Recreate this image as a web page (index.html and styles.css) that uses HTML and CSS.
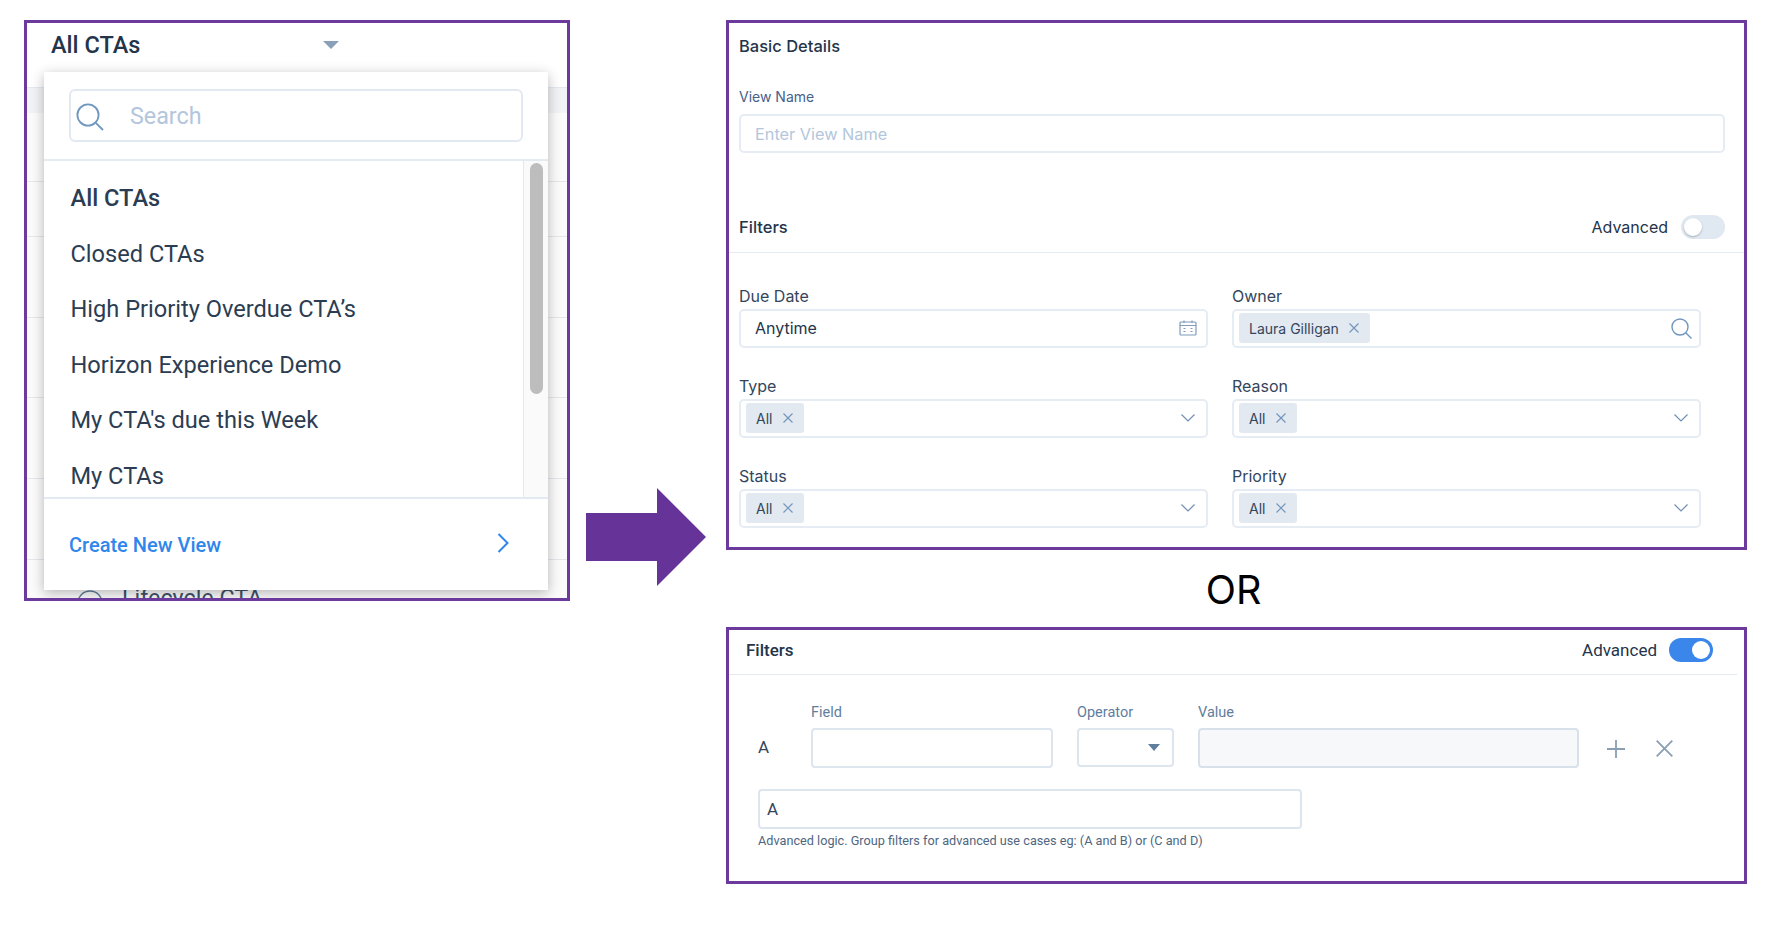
FILE: index.html
```html
<!DOCTYPE html>
<html lang="en">
<head>
    <meta charset="UTF-8">
    <meta name="viewport" content="width=device-width, initial-scale=1.0">
    <title>CTA Views</title>
    <link rel="stylesheet" href="styles.css">
</head>
<body>
    <section class="frame views-frame">
        <div class="views-header">
            <span class="views-title">All CTAs</span>
            <span class="caret views-caret"></span>
        </div>
        <div class="views-bg">
            <div class="bg-row"></div>
            <div class="bg-row"></div>
            <div class="bg-row"></div>
            <div class="bg-row"></div>
            <div class="bg-row"></div>
            <div class="bg-row"></div>
            <div class="bg-row"></div>
            <div class="bg-last">
                <svg class="bg-circle" viewBox="0 0 26 26"><circle cx="13" cy="13" r="12" fill="none" stroke="#5f7d9c" stroke-width="1.5"/></svg>
                <span>Lifecycle CTA</span>
            </div>
        </div>

        <div class="popup">
            <div class="popup-search">
                <div class="search-box">
                    <svg class="search-icon" viewBox="0 0 28 28"><circle cx="12" cy="12" r="10.6" fill="none" stroke="#6f97bf" stroke-width="1.8"/><path d="M19.8 19.8 L27 27" stroke="#6f97bf" stroke-width="1.8" fill="none"/></svg>
                    <span>Search</span>
                </div>
            </div>
            <div class="popup-list">
                <ul class="list-items">
                    <li class="current">All CTAs</li>
                    <li>Closed CTAs</li>
                    <li>High Priority Overdue CTA’s</li>
                    <li>Horizon Experience Demo</li>
                    <li>My CTA's due this Week</li>
                    <li>My CTAs</li>
                </ul>
                <div class="scroll-track"><div class="scroll-thumb"></div></div>
            </div>
            <div class="popup-footer">
                <span>Create New View</span>
                <svg class="footer-chevron" viewBox="0 0 12 20"><path d="M1.5 1 L10.5 10 L1.5 19" fill="none" stroke="#2f86eb" stroke-width="2"/></svg>
            </div>
        </div>
    </section>

    <svg class="big-arrow" viewBox="0 0 120 98"><path d="M0 25 H71 V0 L120 49 L71 98 V73 H0 Z" fill="#663399"/></svg>

    <div class="right-col">
        <section class="frame basic-frame">
            <h3 class="section-title basic-title">Basic Details</h3>
            <label class="small-label">View Name</label>
            <div class="field name-field placeholder">Enter View Name</div>

            <div class="filters-head">
                <h3 class="section-title">Filters</h3>
                <span class="adv-label">Advanced</span>
                <span class="toggle"><span class="knob"></span></span>
            </div>

            <div class="filter-grid">
                <div class="filter">
                    <label>Due Date</label>
                    <div class="field">
                        <span class="plain-value">Anytime</span>
                        <svg class="calendar" viewBox="0 0 18 16"><rect x="1" y="2" width="16" height="13" rx="1" fill="none" stroke="#7f9cbb" stroke-width="1.2"/><path d="M1 5.5 H17 M5 0.5 V3 M13 0.5 V3" stroke="#7f9cbb" stroke-width="1.2"/><path d="M4.5 8.5h2M11.5 8.5h2M4.5 11.5h2M11.5 11.5h2" stroke="#7f9cbb" stroke-width="1.2"/></svg>
                    </div>
                </div>
                <div class="filter">
                    <label>Owner</label>
                    <div class="field">
                        <span class="tag">Laura Gilligan <svg class="tag-x" viewBox="0 0 10 10"><path d="M0.5 0.5 L9.5 9.5 M9.5 0.5 L0.5 9.5" stroke="#7094bb" stroke-width="1.1"/></svg></span>
                        <svg class="owner-search" viewBox="0 0 21 21"><circle cx="9" cy="9" r="8" fill="none" stroke="#6f97bf" stroke-width="1.4"/><path d="M14.8 14.8 L20.5 20.5" stroke="#6f97bf" stroke-width="1.4"/></svg>
                    </div>
                </div>
                <div class="filter">
                    <label>Type</label>
                    <div class="field">
                        <span class="tag">All <svg class="tag-x" viewBox="0 0 10 10"><path d="M0.5 0.5 L9.5 9.5 M9.5 0.5 L0.5 9.5" stroke="#7094bb" stroke-width="1.1"/></svg></span>
                        <svg class="chevron" viewBox="0 0 14 8"><path d="M0.5 0.5 L7 7 L13.5 0.5" fill="none" stroke="#6f8fb3" stroke-width="1.2"/></svg>
                    </div>
                </div>
                <div class="filter">
                    <label>Reason</label>
                    <div class="field">
                        <span class="tag">All <svg class="tag-x" viewBox="0 0 10 10"><path d="M0.5 0.5 L9.5 9.5 M9.5 0.5 L0.5 9.5" stroke="#7094bb" stroke-width="1.1"/></svg></span>
                        <svg class="chevron" viewBox="0 0 14 8"><path d="M0.5 0.5 L7 7 L13.5 0.5" fill="none" stroke="#6f8fb3" stroke-width="1.2"/></svg>
                    </div>
                </div>
                <div class="filter">
                    <label>Status</label>
                    <div class="field">
                        <span class="tag">All <svg class="tag-x" viewBox="0 0 10 10"><path d="M0.5 0.5 L9.5 9.5 M9.5 0.5 L0.5 9.5" stroke="#7094bb" stroke-width="1.1"/></svg></span>
                        <svg class="chevron" viewBox="0 0 14 8"><path d="M0.5 0.5 L7 7 L13.5 0.5" fill="none" stroke="#6f8fb3" stroke-width="1.2"/></svg>
                    </div>
                </div>
                <div class="filter">
                    <label>Priority</label>
                    <div class="field">
                        <span class="tag">All <svg class="tag-x" viewBox="0 0 10 10"><path d="M0.5 0.5 L9.5 9.5 M9.5 0.5 L0.5 9.5" stroke="#7094bb" stroke-width="1.1"/></svg></span>
                        <svg class="chevron" viewBox="0 0 14 8"><path d="M0.5 0.5 L7 7 L13.5 0.5" fill="none" stroke="#6f8fb3" stroke-width="1.2"/></svg>
                    </div>
                </div>
            </div>
        </section>

        <div class="or-text">OR</div>

        <section class="frame advanced-frame">
            <div class="adv-head">
                <h3 class="adv-title">Filters</h3>
                <span class="adv-label2">Advanced</span>
                <span class="toggle on"><span class="knob"></span></span>
            </div>
            <div class="rule-row">
                <span class="rule-letter">A</span>
                <div class="rule-col col-field">
                    <label>Field</label>
                    <div class="box"></div>
                </div>
                <div class="rule-col col-operator">
                    <label>Operator</label>
                    <div class="box op-box"><span class="caret op-caret"></span></div>
                </div>
                <div class="rule-col col-value">
                    <label>Value</label>
                    <div class="box value-box"></div>
                </div>
                <svg class="rule-btn plus-btn" viewBox="0 0 18 18"><path d="M9 0 V18 M0 9 H18" stroke="#8a9fb3" stroke-width="1.8"/></svg>
                <svg class="rule-btn x-btn" viewBox="0 0 17 17"><path d="M0.7 0.7 L16.3 16.3 M16.3 0.7 L0.7 16.3" stroke="#8a9fb3" stroke-width="1.8"/></svg>
            </div>
            <div class="box logic-box">A</div>
            <p class="help-text">Advanced logic. Group filters for advanced use cases eg: (A and B) or (C and D)</p>
        </section>
    </div>
</body>
</html>
```

FILE: styles.css
```css
* {
    box-sizing: border-box;
}

body {
    margin: 0;
    width: 1776px;
    height: 926px;
    padding: 20px 0 0 24px;
    display: flex;
    align-items: flex-start;
    background: #fff;
    font-family: 'Inter', 'Roboto', sans-serif;
    color: #24344a;
    overflow: hidden;
}

.frame {
    border: 3px solid #6b3a9c;
    background: #fff;
}

/* left: views dropdown */
.views-frame {
    position: relative;
    width: 546px;
    height: 581px;
    overflow: hidden;
    font-family: 'Roboto', sans-serif;
}

.views-header {
    height: 65px;
    padding: 0 0 20px 24px;
    display: flex;
    align-items: center;
    border-bottom: 1px solid #e4e9ef;
}

.views-title {
    font-size: 23.5px;
    font-weight: 500;
    color: #24344a;
    width: 272px;
}

.caret {
    display: inline-block;
    width: 0;
    height: 0;
    border-left: 8px solid transparent;
    border-right: 8px solid transparent;
    border-top: 8px solid #8a9fb8;
}

.views-bg {
    height: 510px;
    background: #fbfbfc;
}

.bg-row {
    height: 81px;
    border-bottom: 1px solid #e4e7ec;
}

.bg-row:nth-child(1) {
    height: 25px;
    border-bottom: 0;
    background: #f1f3f6;
}

.bg-row:nth-child(2) {
    height: 69px;
}

.bg-row:nth-child(3) {
    height: 55px;
}

.bg-row:nth-child(5) {
    height: 80px;
}

.bg-last {
    display: flex;
    align-items: flex-start;
    gap: 19px;
    margin-top: 30px;
    padding-left: 50px;
    font-size: 23.3px;
    line-height: 26px;
    color: #3f5268;
}

.bg-last span {
    margin-top: -5px;
}

.bg-circle {
    width: 26px;
    height: 26px;
    flex: none;
}

.popup {
    position: absolute;
    left: 17px;
    top: 49px;
    width: 504px;
    height: 518px;
    background: #fff;
    display: flex;
    flex-direction: column;
    box-shadow: 0 3px 12px rgba(0, 0, 0, 0.28);
}

.popup-search {
    height: 89px;
    padding: 17px 25px 0;
    border-bottom: 2px solid #e4eaf1;
}

.search-box {
    height: 53px;
    border: 2px solid #e2e9f1;
    border-radius: 6px;
    display: flex;
    align-items: center;
    padding-left: 5px;
    font-size: 23.3px;
    color: #b3c6dc;
}

.search-icon {
    width: 28px;
    height: 28px;
    margin: 3px 26px 0 0;
}

.popup-list {
    height: 338px;
    display: flex;
    overflow: hidden;
    border-bottom: 2px solid #e4eaf1;
}

.list-items {
    list-style: none;
    margin: 0;
    padding: 10px 0 0 26.5px;
    width: 480px;
    font-size: 23.6px;
    color: #2b3d52;
    border-right: 1px solid #e4e9ef;
}

.list-items li {
    height: 55.6px;
    line-height: 55.6px;
    white-space: nowrap;
}

.list-items .current {
    font-weight: 500;
}

.scroll-track {
    flex: 1;
    padding: 2px 0 0 6px;
    background: #fafafa;
}

.scroll-thumb {
    width: 13px;
    height: 231px;
    background: #bdbdbd;
    border-radius: 7px;
}

.popup-footer {
    flex: 1;
    padding: 0 39px 0 25px;
    display: flex;
    align-items: center;
    justify-content: space-between;
    font-size: 20px;
    font-weight: 500;
    color: #2f86eb;
}

.footer-chevron {
    width: 12px;
    height: 20px;
    margin-top: -4px;
}

/* middle arrow */
.big-arrow {
    width: 120px;
    height: 98px;
    margin: 468px 0 0 16px;
    flex: none;
}

/* right column */
.right-col {
    width: 1021px;
    margin-left: 20px;
    flex: none;
}

.basic-frame {
    height: 530px;
    padding: 0 0 0 10px;
}

.section-title {
    margin: 0;
    font-size: 16.5px;
    font-weight: 500;
    color: #24344a;
}

.basic-title {
    padding-top: 13px;
    line-height: 20px;
}

.small-label {
    display: block;
    margin-top: 32px;
    font-size: 14px;
    line-height: 18px;
    color: #46618a;
}

.field {
    height: 39px;
    border: 2px solid #e6ecf3;
    border-radius: 5px;
    display: flex;
    align-items: center;
    justify-content: space-between;
    padding: 0 9px 0 5px;
    font-size: 14px;
}

.name-field {
    width: 986px;
    margin-top: 8px;
    padding-left: 14px;
    font-size: 16.3px;
}

.placeholder {
    color: #b3c6dc;
}

.filters-head {
    margin: 62px 0 0 -10px;
    padding: 0 19px 13px 10px;
    display: flex;
    align-items: center;
    justify-content: flex-end;
    gap: 13px;
    border-bottom: 1px solid #e4eaf1;
}

.filters-head .section-title {
    margin-right: auto;
}

.adv-label {
    font-size: 16px;
    color: #24344a;
}

.toggle {
    display: block;
    width: 44px;
    height: 24px;
    border-radius: 12px;
    background: #e0e8f1;
    padding: 3px;
}

.knob {
    display: block;
    width: 18px;
    height: 18px;
    border-radius: 50%;
    background: #fff;
    box-shadow: 0 1px 2px rgba(0, 0, 0, 0.25);
}

.toggle.on {
    background: #3a86ea;
    padding-left: 23px;
}

.toggle.on .knob {
    box-shadow: none;
}

.filter-grid {
    margin-top: 33.5px;
    display: grid;
    grid-template-columns: 469px 469px;
    column-gap: 24px;
    row-gap: 24px;
}

.filter label {
    display: block;
    font-size: 16px;
    line-height: 19px;
    margin-bottom: 3px;
    color: #33465c;
}

.filter {
    height: 66px;
}

.plain-value {
    padding-left: 9px;
    font-size: 16px;
}

.tag {
    height: 30px;
    display: inline-flex;
    align-items: center;
    padding: 0 11px 0 10px;
    gap: 10.5px;
    background: #e2e9f1;
    border-radius: 3px;
    font-size: 14px;
    color: #33465c;
}

.tag-x {
    width: 10px;
    height: 10px;
}

.calendar {
    width: 18px;
    height: 16px;
}

.owner-search {
    width: 21px;
    height: 21px;
    margin-right: -2px;
}

.chevron {
    width: 14px;
    height: 8px;
    margin-right: 2px;
}

.or-text {
    height: 77px;
    padding-right: 6px;
    text-align: center;
    font-size: 39.5px;
    line-height: 80px;
    color: #000;
}

/* bottom panel */
.advanced-frame {
    height: 257px;
    font-family: 'Roboto', sans-serif;
}

.adv-head {
    width: 1008px;
    height: 45px;
    display: flex;
    align-items: center;
    padding: 0 24px 4px 17px;
    gap: 12px;
    border-bottom: 1px solid #e4eaf1;
}

.adv-title {
    margin: 0 auto 0 0;
    font-size: 17px;
    font-weight: 500;
    color: #24344a;
}

.adv-label2 {
    font-size: 17px;
    color: #24344a;
}

.rule-row {
    display: flex;
    align-items: flex-start;
    margin-top: 29px;
    padding-left: 29px;
}

.rule-letter {
    width: 53px;
    margin-top: 33px;
    font-size: 17px;
    line-height: 20px;
    color: #33465c;
}

.rule-col label {
    display: block;
    height: 24px;
    font-size: 14.5px;
    line-height: 17px;
    color: #5f7d9c;
}

.box {
    height: 40px;
    border: 2px solid #dde5ee;
    border-radius: 4px;
    background: #fff;
}

.col-field {
    width: 242px;
}

.col-operator {
    width: 97px;
    margin-left: 24px;
}

.op-box {
    height: 39px;
    display: flex;
    align-items: center;
    justify-content: flex-end;
    padding-right: 12px;
}

.op-caret {
    border-left-width: 6.5px;
    border-right-width: 6.5px;
    border-top: 7px solid #5f7d9c;
}

.col-value {
    width: 381px;
    margin-left: 24px;
}

.value-box {
    background: #f6f8fa;
    border-color: #d8e1ea;
}

.rule-btn {
    flex: none;
    margin-top: 36px;
}

.plus-btn {
    width: 18px;
    height: 18px;
    margin-left: 28px;
}

.x-btn {
    width: 17px;
    height: 17px;
    margin-left: 31px;
}

.logic-box {
    width: 544px;
    margin: 21px 0 0 29px;
    padding-left: 7px;
    font-size: 17px;
    line-height: 36px;
    color: #33465c;
}

.help-text {
    margin: 3px 0 0 29px;
    font-size: 12.7px;
    line-height: 18px;
    color: #4f6680;
}
```
